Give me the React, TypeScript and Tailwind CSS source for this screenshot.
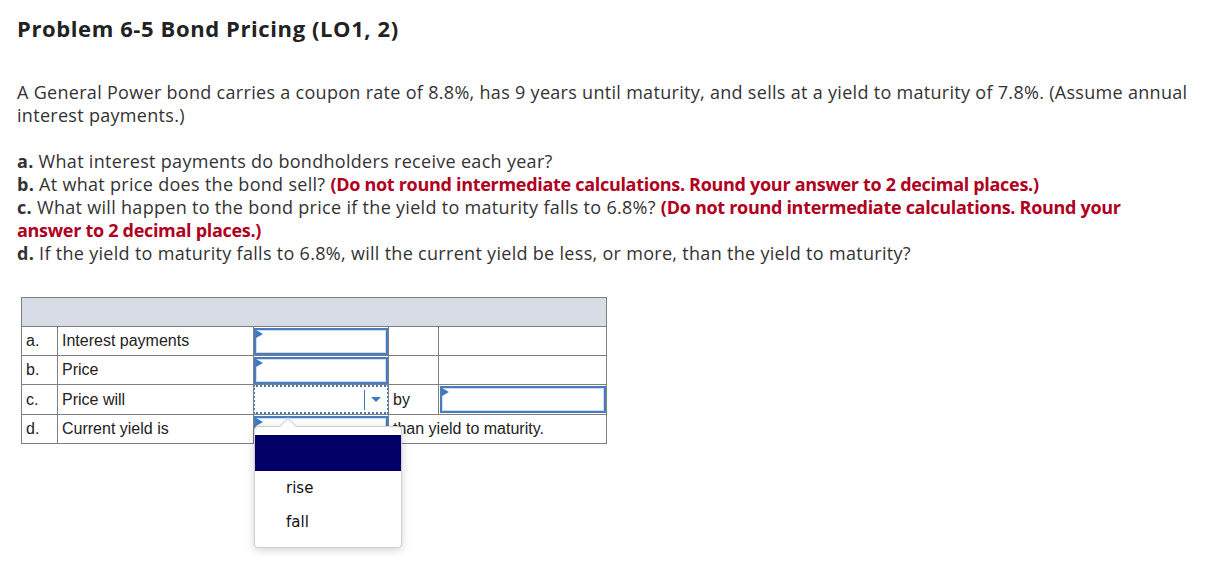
import React from "react";

const sans = { fontFamily: "'Open Sans', Lato, sans-serif" };

function BlueInput({ className = "" }: { className?: string }) {
  return (
    <div className={"relative h-[27px] border-2 border-[#4a7bbd] bg-white " + className}>
      <div className="absolute inset-0 border border-[#c9dcf3]" />
      <div className="absolute left-0 top-0 w-0 h-0 border-t-[4px] border-b-[4px] border-l-[7px] border-t-transparent border-b-transparent border-l-[#3f78c2]" />
    </div>
  );
}

export default function App() {
  return (
    <div className="relative w-[1215px] h-[588px] bg-white text-[#333]" style={sans}>
      <div className="pl-[17px] pt-[13px]">
        <h1 className="text-[22px] font-bold text-[#222] leading-[30px] tracking-[0.6px]">Problem 6-5 Bond Pricing (LO1, 2)</h1>

        <p className="mt-[38px] text-[18px] leading-[23px] tracking-[0.3px] whitespace-nowrap">
          A General Power bond carries a coupon rate of 8.8%, has 9 years until maturity, and sells at a yield to maturity of 7.8%. (Assume annual
          <br />
          interest payments.)
        </p>

        <div className="mt-[23px] text-[18px] leading-[23px] tracking-[0.3px] whitespace-nowrap">
          <div><b>a.</b> What interest payments do bondholders receive each year?</div>
          <div>
            <b>b.</b> At what price does the bond sell?{" "}
            <b className="text-[#b0001e] tracking-[-0.3px]">(Do not round intermediate calculations. Round your answer to 2 decimal places.)</b>
          </div>
          <div>
            <b>c.</b> What will happen to the bond price if the yield to maturity falls to 6.8%?{" "}
            <b className="text-[#b0001e] tracking-[-0.3px]">(Do not round intermediate calculations. Round your</b>
            <br />
            <b className="text-[#b0001e] tracking-[-0.3px]">answer to 2 decimal places.)</b>
          </div>
          <div><b>d.</b> If the yield to maturity falls to 6.8%, will the current yield be less, or more, than the yield to maturity?</div>
        </div>

        <table
          className="mt-[32px] ml-[4px] border-collapse text-[16px] text-[#222]"
          style={{ fontFamily: "'Liberation Sans', Arial, sans-serif" }}
        >
          <colgroup>
            <col className="w-[36px]" />
            <col className="w-[196px]" />
            <col className="w-[135px]" />
            <col className="w-[50px]" />
            <col className="w-[168px]" />
          </colgroup>
          <tbody>
            <tr className="h-[29px] bg-[#d8dce6]">
              <td colSpan={5} className="border border-[#7f7f7f]" />
            </tr>
            <tr className="h-[29px]">
              <td className="border border-[#7f7f7f] pl-[4px]">a.</td>
              <td className="border border-[#7f7f7f] pl-[4px]">Interest payments</td>
              <td className="border border-[#7f7f7f] p-0"><BlueInput /></td>
              <td className="border border-[#7f7f7f]" />
              <td className="border border-[#7f7f7f]" />
            </tr>
            <tr className="h-[29px]">
              <td className="border border-[#7f7f7f] pl-[4px]">b.</td>
              <td className="border border-[#7f7f7f] pl-[4px]">Price</td>
              <td className="border border-[#7f7f7f] p-0"><BlueInput /></td>
              <td className="border border-[#7f7f7f]" />
              <td className="border border-[#7f7f7f]" />
            </tr>
            <tr className="h-[29px]">
              <td className="border border-[#7f7f7f] pl-[4px]">c.</td>
              <td className="border border-[#7f7f7f] pl-[4px]">Price will</td>
              <td className="border border-[#7f7f7f] p-0">
                <div className="h-[29px] -mx-[1px] border-2 border-dotted border-[#3f78c2] flex items-center justify-end bg-white">
                  <div className="h-[20px] w-px bg-[#3f78c2]" />
                  <div className="mx-[6px] w-0 h-0 border-l-[5px] border-r-[5px] border-t-[5px] border-l-transparent border-r-transparent border-t-[#3f78c2]" />
                </div>
              </td>
              <td className="border border-[#7f7f7f] pl-[4px]">by</td>
              <td className="border border-[#7f7f7f] p-0 pl-px"><BlueInput /></td>
            </tr>
            <tr className="h-[29px]">
              <td className="border border-[#7f7f7f] pl-[4px]">d.</td>
              <td className="border border-[#7f7f7f] pl-[4px]">Current yield is</td>
              <td className="border border-[#7f7f7f] p-0"><BlueInput /></td>
              <td colSpan={2} className="border border-[#7f7f7f] pl-[4px]">than yield to maturity.</td>
            </tr>
          </tbody>
        </table>
      </div>

      {/* open dropdown menu */}
      <div
        className="absolute left-[254px] top-[426px] w-[148px] h-[122px] bg-white border border-[#cfcfcf] rounded-[4px] shadow-[0_2px_8px_rgba(0,0,0,0.18)]"
        style={{ fontFamily: "'DejaVu Sans', Verdana, sans-serif" }}
      >
        <div className="absolute left-[27px] -top-[7px] w-[12px] h-[12px] rotate-45 bg-white border-l border-t border-[#cfcfcf]" />
        <div className="relative mt-[8px] h-[36px] bg-[#000066]" />
        <div className="pl-[31px] text-[15px] text-[#111] leading-[34px]">
          <div>rise</div>
          <div>fall</div>
        </div>
      </div>
    </div>
  );
}
